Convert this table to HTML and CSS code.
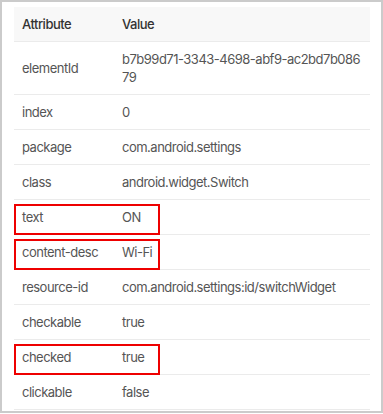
FILE: index.html
```html
<!DOCTYPE html>
<html lang="en">
<head>
    <meta charset="UTF-8">
    <meta name="viewport" content="width=device-width, initial-scale=1.0">
    <title>Element attributes</title>
    <link rel="stylesheet" href="styles.css">
</head>
<body>
    <div class="panel">
        <table class="attrs">
            <thead>
                <tr>
                    <th>Attribute</th>
                    <th>Value</th>
                </tr>
            </thead>
            <tbody>
                <tr><td>elementId</td><td>b7b99d71-3343-4698-abf9-ac2bd7b08679</td></tr>
                <tr><td>index</td><td>0</td></tr>
                <tr><td>package</td><td>com.android.settings</td></tr>
                <tr><td>class</td><td>android.widget.Switch</td></tr>
                <tr class="marked"><td>text</td><td>ON</td></tr>
                <tr class="marked"><td>content-desc</td><td>Wi-Fi</td></tr>
                <tr><td>resource-id</td><td>com.android.settings:id/switchWidget</td></tr>
                <tr><td>checkable</td><td>true</td></tr>
                <tr class="marked"><td>checked</td><td>true</td></tr>
                <tr><td>clickable</td><td>false</td></tr>
            </tbody>
        </table>
    </div>
</body>
</html>
```

FILE: styles.css
```css
* {
    margin: 0;
    padding: 0;
    box-sizing: border-box;
}

body {
    font-family: Inter, "Noto Sans", Arial, sans-serif;
    font-size: 13px;
    letter-spacing: -0.5px;
    color: #555;
    background: #fff;
}

.panel {
    width: 383px;
    height: 413px;
    border: 2px solid #cbcbcb;
    padding: 5px 10px 0 12px;
    overflow: hidden;
}

.attrs {
    width: 356px;
    border-collapse: collapse;
    table-layout: fixed;
}

.attrs th,
.attrs td {
    text-align: left;
    padding: 8px;
    line-height: 18px;
    border-bottom: 1px solid #ebebeb;
    vertical-align: middle;
}

.attrs th {
    background: #f8f8f8;
    color: #333;
    font-weight: 500;
}

.attrs th:first-child,
.attrs td:first-child {
    width: 100px;
}

.attrs td:last-child {
    word-break: break-all;
}

.attrs tr.marked td:first-child {
    position: relative;
}

/* red annotation frame over the row */
.attrs tr.marked td:first-child::after {
    content: "";
    position: absolute;
    left: 0;
    top: 4px;
    width: 142px;
    height: 27px;
    border: 2px solid #ee0000;
    pointer-events: none;
}
```
